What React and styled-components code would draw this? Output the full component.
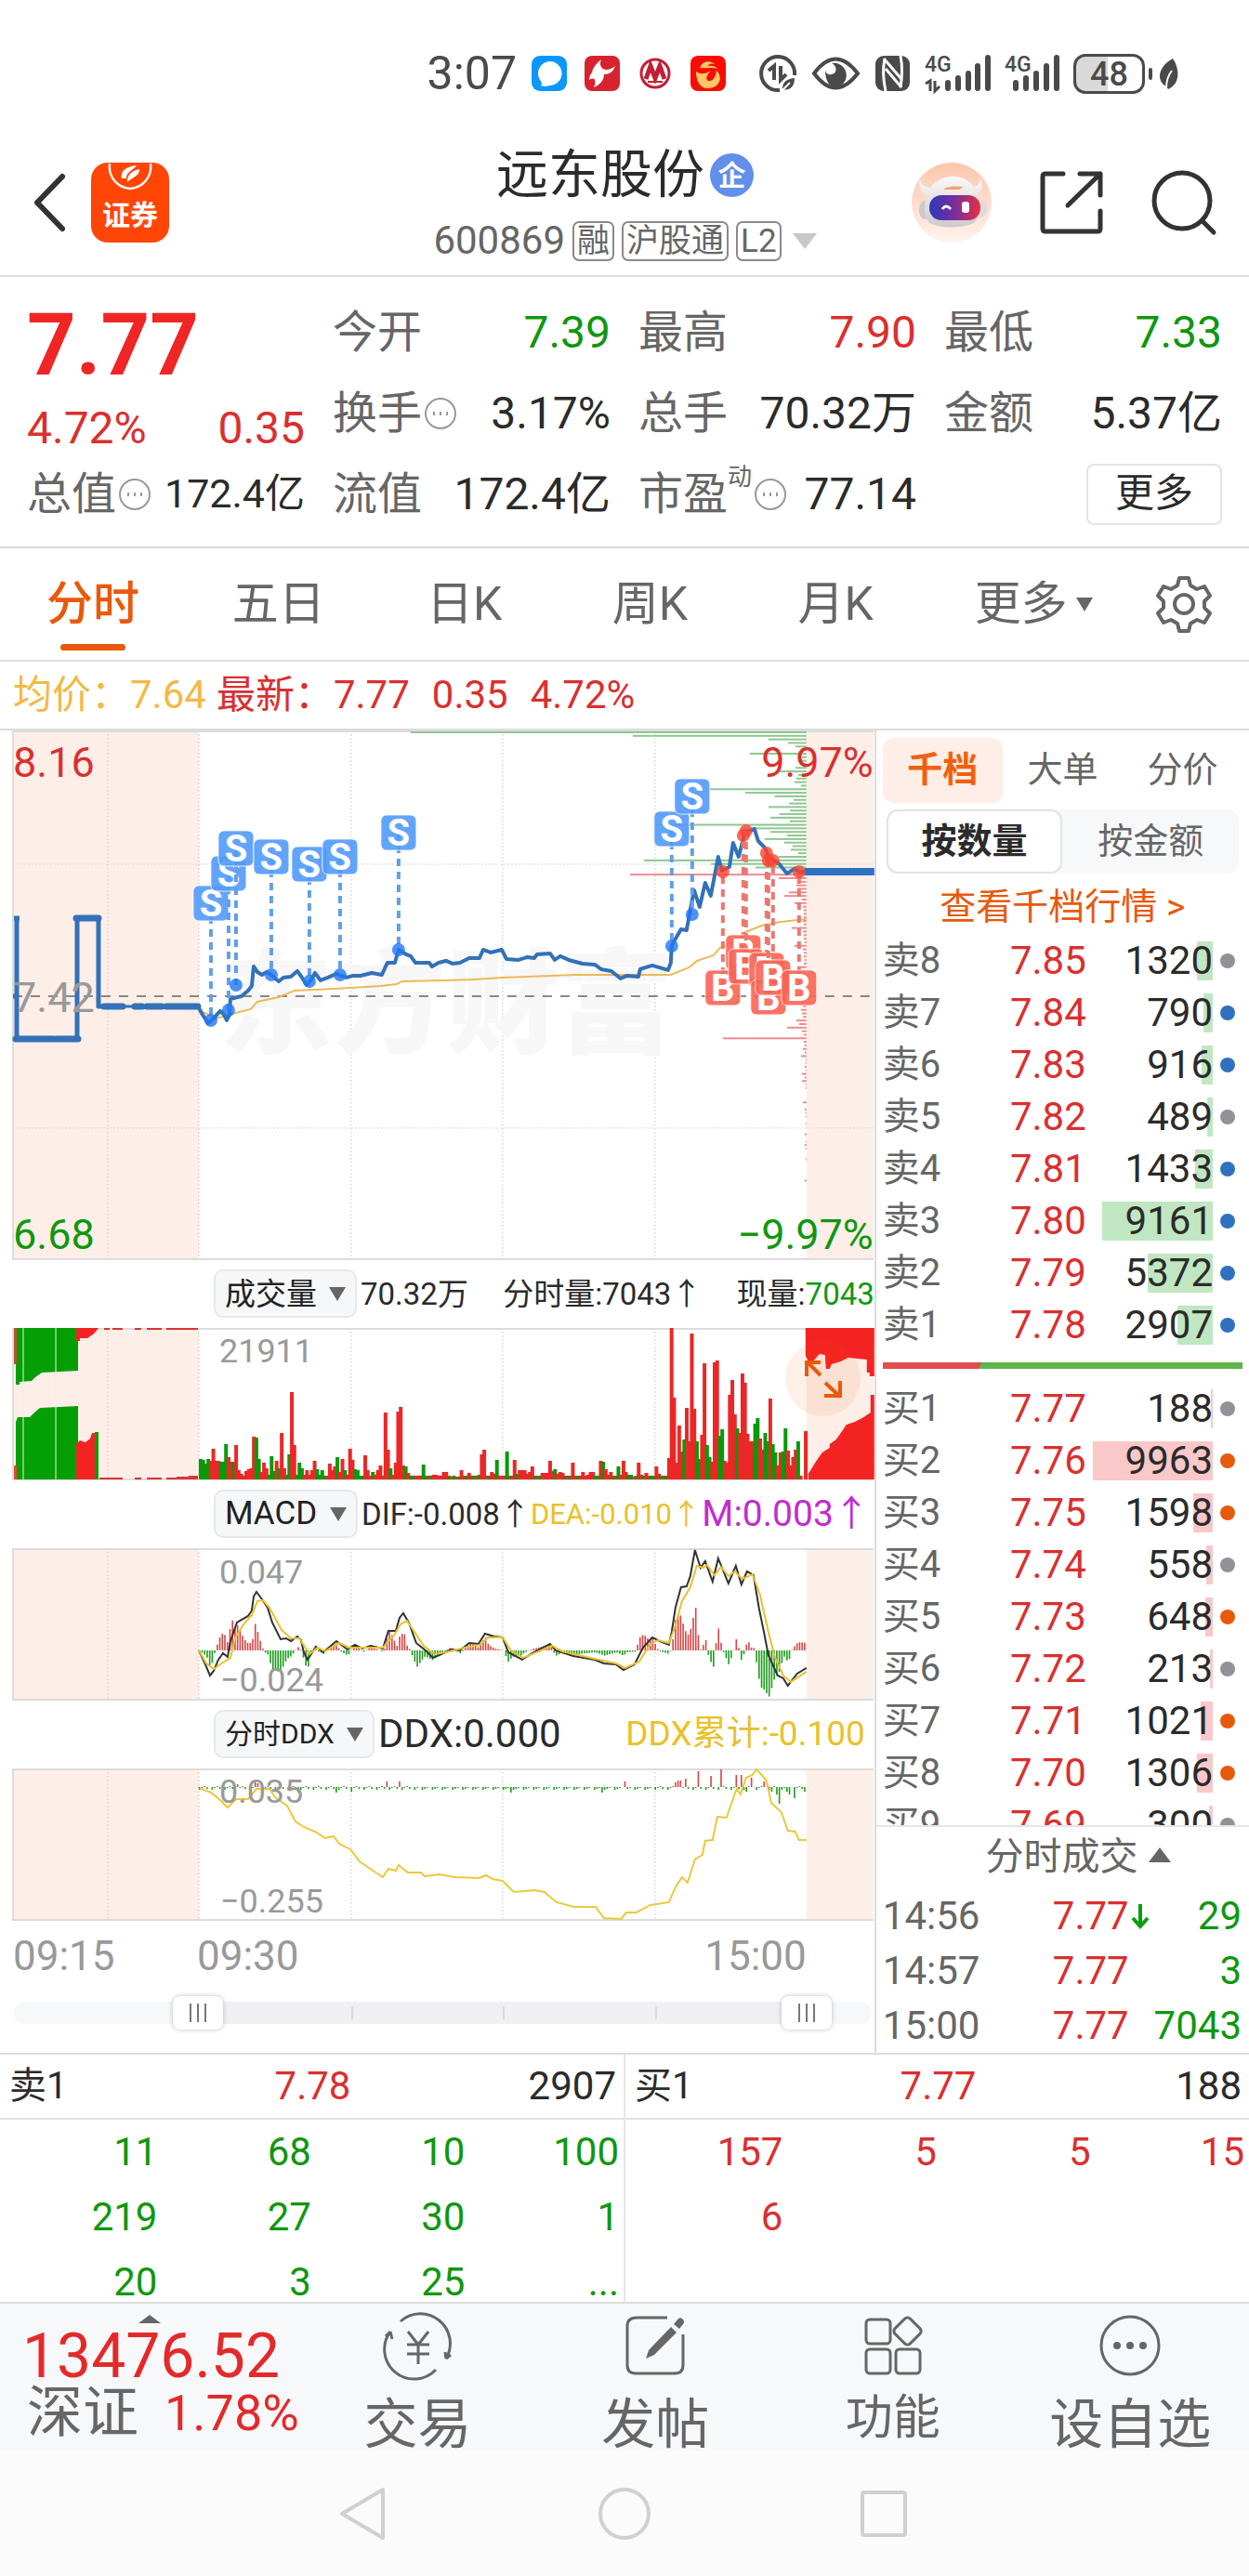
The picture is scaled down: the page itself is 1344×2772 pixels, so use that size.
import React, { useState } from "react";
import styled, { createGlobalStyle } from "styled-components";

const GlobalStyle = createGlobalStyle`
  * { box-sizing: border-box; }
  body {
    margin: 0;
    background: #fff;
    color: #2b2b2b;
    font-family: Roboto, "Noto Sans CJK SC", sans-serif;
    line-height: 1.2;
  }
  button, select, input { font-family: inherit; line-height: inherit; margin: 0; }
  button { border: 0; padding: 0; background: none; color: inherit; cursor: pointer; }
  a { color: inherit; text-decoration: none; }
  svg { display: block; overflow: visible; }
  table { border-collapse: collapse; table-layout: fixed; width: 100%; }
  th, td { padding: 0; font-weight: 400; }
`;

const RED = "#d9302f";
const GREEN = "#0f970f";
const ORANGE = "#e8590c";
const GRAY = "#666";
const LINE = "#dcdcdc";
const PINK = "#fdeee8";
const colors = { red: RED, green: GREEN, dark: "#2b2b2b", gray: GRAY };

/* ---------- status bar ---------- */
const StatusBar = styled.div`
  height: 108px;
  padding: 50px 76px 0 0;
  display: flex;
  justify-content: flex-end;
  align-items: center;
  gap: 16px;
  color: #4a4a4a;
`;
const Clock = styled.time`
  font-size: 50px;
  line-height: 58px;
`;
const Notices = styled.div`
  display: flex;
  gap: 19px;
  margin-right: 20px;
`;
const Battery = styled.div`
  position: relative;
  width: 77px;
  height: 43px;
  border: 3px solid #4a4a4a;
  border-radius: 13px;
  background: linear-gradient(90deg, #d9d9d9 48%, #fff 48%);
  font-size: 36px;
  font-weight: 500;
  line-height: 38px;
  text-align: center;
  &::after {
    content: "";
    position: absolute;
    right: -11px;
    top: 12px;
    width: 4px;
    height: 13px;
    border-radius: 2px;
    background: #4a4a4a;
  }
`;

function Signal({ data }) {
  const bars = data ? [24, 35, 46, 56, 67] : [11, 22, 33, 44, 55];
  const heights = [12, 17, 22, 30, 39];
  const w = data ? 70 : 58;
  return (
    <svg width={w} height="40" viewBox={`0 0 ${w} 40`} fill="currentColor">
      <text x="0" y="18" fontSize="23" fontWeight="500">4G</text>
      {data && <path d="M1 31l5-3v11M6 28v11M11 28v11l5-5" fill="none" stroke="currentColor" strokeWidth="3" />}
      {bars.map((x, i) => (
        <rect key={x} x={x - 2} y={39 - heights[i]} width="6" height={heights[i]} rx="3" />
      ))}
    </svg>
  );
}

function Status() {
  return (
    <StatusBar>
      <Clock>3:07</Clock>
      <Notices>
        <svg width="38" height="38" viewBox="0 0 38 38">
          <rect width="38" height="38" rx="9" fill="#0b97ff" />
          <path d="M19 6a13 13 0 0 1 1 26c-3 0-5 2-10 0 2-2 1-3-1-6A13 13 0 0 1 19 6z" fill="#fff" />
        </svg>
        <svg width="38" height="38" viewBox="0 0 38 38">
          <rect width="38" height="38" rx="8" fill="#d6232f" />
          <path d="M18 4c-6 5-9 9-10 14-2 2-3 5-3 8 3-2 5-2 6 0 1 3 0 5-1 8 7-3 11-8 11-14 6 0 10-3 12-9-5 4-10 5-13 3-3-2-4-6-2-10z" fill="#fff" />
        </svg>
        <svg width="38" height="38" viewBox="0 0 38 38">
          <circle cx="19" cy="19" r="15" fill="#fff" stroke="#c01f35" strokeWidth="3" />
          <path d="M9 25l5-14 5 13 5-13 5 14" fill="none" stroke="#c01f35" strokeWidth="5" />
          <path d="M11 28h16" stroke="#c01f35" strokeWidth="2" />
        </svg>
        <svg width="38" height="38" viewBox="0 0 38 38">
          <rect width="38" height="38" rx="8" fill="#f80d05" />
          <path d="M6 17c6 4 11 2 16-1-5 5-6 9-3 11 5 1 8-4 9-11 7 6 4 18-8 19C11 36 6 28 6 17z" fill="#ffc867" />
          <path d="M10 13c3-7 9-9 17-4-5-1-7 0-9 2 4-1 9 0 11 3-7-2-12 0-19-1z" fill="#ffc867" />
        </svg>
      </Notices>
      <svg width="40" height="40" viewBox="0 0 40 40" fill="none" stroke="currentColor" strokeWidth="4">
        <path d="M22 38A18 18 0 1 1 38 22" />
        <path d="M10 17l6-5v15M23 12v15l6-6" strokeWidth="4" />
        <path d="M25 37c0-8 4-11 13-12 0 9-5 14-13 12z" fill="currentColor" stroke="none" />
        <path d="M25 38l8-8" stroke="#fff" strokeWidth="2" />
      </svg>
      <svg width="53" height="38" viewBox="0 0 53 38">
        <path d="M3 19Q26-12 50 19Q26 50 3 19z" fill="none" stroke="currentColor" strokeWidth="4" />
        <path d="M22 8c6 3 6 11 0 12-4 1-6-1-7-4 0 10 4 18 12 18a13 13 0 0 0-5-26z" fill="currentColor" />
      </svg>
      <svg width="37" height="38" viewBox="0 0 37 38">
        <rect width="37" height="38" rx="9" fill="currentColor" />
        <path d="M10 4c-2 8-2 20 1 34M27 0c2 10 2 22 0 34" stroke="#fff" strokeWidth="3" fill="none" />
        <path d="M9 3l19 22M11 14l17 20" stroke="#fff" strokeWidth="3" />
      </svg>
      <Signal data />
      <Signal />
      <Battery>48</Battery>
      <svg width="20" height="34" viewBox="0 0 20 34">
        <path d="M14 1C5 6 0 13 0 20c0 5 3 9 7 11l2 3c14-6 12-23 5-33z" fill="currentColor" />
        <path d="M7 33c0-9 2-14 6-19" stroke="#fff" strokeWidth="2" fill="none" />
      </svg>
    </StatusBar>
  );
}

/* ---------- title ---------- */
const Header = styled.header`
  display: grid;
  grid-template-columns: 1fr auto 1fr;
  align-items: center;
  height: 190px;
  padding: 32px 35px 0 36px;
  border-bottom: 2px solid ${LINE};
`;
const HeaderSide = styled.div`
  display: flex;
  align-items: center;
  justify-content: ${(p) => (p.$end ? "flex-end" : "flex-start")};
  gap: ${(p) => (p.$end ? "52px" : "26px")};
`;
const Brand = styled.button`
  width: 84px;
  height: 86px;
  border-radius: 18px;
  background: #ff4606;
  color: #fff;
  font-size: 30px;
  font-weight: 700;
  line-height: 38px;
  display: flex;
  flex-direction: column;
  align-items: center;
  gap: 4px;
`;
const NameRow = styled.div`
  display: flex;
  align-items: center;
  justify-content: center;
  height: 82px;
  gap: 6px;
`;
const Name = styled.h1`
  margin: 0;
  font-size: 56px;
  font-weight: 400;
  line-height: 82px;
`;
const NameBadge = styled.span`
  width: 47px;
  height: 47px;
  border-radius: 50%;
  background: #628fe9;
  color: #fff;
  font-size: 30px;
  font-weight: 700;
  line-height: 47px;
  text-align: center;
`;
const CodeRow = styled.div`
  display: flex;
  align-items: center;
  height: 60px;
  gap: 8px;
  color: ${GRAY};
  font-size: 42px;
`;
const Tag = styled.span`
  border: 2px solid #8a8a8a;
  border-radius: 7px;
  padding: 0 3px;
  height: 43px;
  font-size: 35px;
  line-height: 40px;
`;
const Caret = styled.i`
  display: inline-block;
  border: ${(p) => p.$size}px solid transparent;
  border-top: ${(p) => p.$tall}px solid ${(p) => p.$color};
  border-bottom: 0;
  ${(p) => p.$up && "transform: rotate(180deg); vertical-align: 8px;"}
  margin-left: ${(p) => p.$gap || 0}px;
`;

function TitleBar() {
  return (
    <Header>
      <HeaderSide>
        <button aria-label="返回">
          <svg width="36" height="64" viewBox="0 0 36 64" fill="none" stroke="#333" strokeWidth="6" strokeLinecap="round" strokeLinejoin="round">
            <path d="M31 4L4 32l27 28" />
          </svg>
        </button>
        <Brand>
          <svg width="50" height="34" viewBox="0 0 50 34">
            <path d="M3 1C1 16 12 27 25 28C38 27 49 16 47 1" fill="none" stroke="#fff" strokeWidth="2.500" />
            <path d="M16 17C14 10 20 4 32 3c-4 6-11 6-11 14zM22 21c0-9 5-12 13-14 0 8-7 8-13 14z" fill="#fff" />
          </svg>
          证券
        </Brand>
      </HeaderSide>
      <div>
        <NameRow>
          <Name>远东股份</Name>
          <NameBadge>企</NameBadge>
        </NameRow>
        <CodeRow>
          600869
          <Tag>融</Tag>
          <Tag>沪股通</Tag>
          <Tag>L2</Tag>
          <Caret $size={13} $tall={17} $color="#c8c8c8" $gap={4} />
        </CodeRow>
      </div>
      <HeaderSide $end>
        <button aria-label="助手">
          <svg width="86" height="86" viewBox="0 0 86 86">
            <defs>
              <linearGradient id="halo" x1="0" y1="0" x2="0" y2="1">
                <stop offset="0" stopColor="#fcc6ab" />
                <stop offset="1" stopColor="#fff3ee" />
              </linearGradient>
              <linearGradient id="visor">
                <stop offset="0" stopColor="#2a3bb8" />
                <stop offset="0.5" stopColor="#7a2d9c" />
                <stop offset="1" stopColor="#e8303c" />
              </linearGradient>
              <linearGradient id="shell" x1="0" y1="0" x2="0" y2="1">
                <stop offset="0" stopColor="#fbf8f8" />
                <stop offset="1" stopColor="#cfc9cb" />
              </linearGradient>
            </defs>
            <circle cx="43" cy="43" r="43" fill="url(#halo)" />
            <ellipse cx="14" cy="51" rx="6" ry="10" fill="#cdc8ca" />
            <ellipse cx="75" cy="50" rx="6" ry="9" fill="#dedadb" />
            <path d="M9 17c1 7 5 9 11 10 12-16 36-16 47-1 5-1 6-5 7-9 4 9 1 15-4 18 5 14 3 24-3 30-14 6-36 6-48 0-6-8-6-19-3-30-6-3-9-10-7-18z" fill="url(#shell)" />
            <rect x="19" y="35" width="55" height="27" rx="13" fill="url(#visor)" />
            <path d="M33 50q4-6 9 0" fill="none" stroke="#fff" strokeWidth="3" />
            <rect x="54" y="42" width="8" height="12" rx="3" fill="#fff" />
            <path d="M34 29q5-5 22-3l-5 3z" fill="#eea26b" />
          </svg>
        </button>
        <button aria-label="分享">
          <svg width="68" height="68" viewBox="0 0 68 68" fill="none" stroke="#333" strokeWidth="5" strokeLinecap="round" strokeLinejoin="round">
            <path d="M25 3H6q-3 0-3 3v56q0 3 3 3h56q3 0 3-3V43" />
            <path d="M43 3h22v23M65 3L30 37" />
          </svg>
        </button>
        <button aria-label="搜索">
          <svg width="70" height="70" viewBox="0 0 70 70" fill="none" stroke="#333" strokeWidth="5" strokeLinecap="round">
            <circle cx="33" cy="33" r="30" />
            <path d="M55 55l12 12" />
          </svg>
        </button>
      </HeaderSide>
    </Header>
  );
}

/* ---------- quote ---------- */
const QuoteGrid = styled.section`
  display: grid;
  grid-template-columns: repeat(4, 1fr);
  grid-auto-rows: 87px;
  column-gap: 30px;
  padding: 16px 29px 13px;
  border-bottom: 2px solid ${LINE};
`;
const Lead = styled.div`
  grid-row: 1 / 3;
  color: ${RED};
`;
const Price = styled.div`
  color: #f02525;
  font-size: 92px;
  font-weight: 700;
  line-height: 116px;
`;
const Change = styled.div`
  display: flex;
  justify-content: space-between;
  font-size: 48px;
  line-height: 62px;
`;
const StatCell = styled.div`
  display: flex;
  align-items: center;
  font-size: 48px;
  white-space: nowrap;
`;
const StatLabel = styled.span`
  color: ${GRAY};
`;
const Sup = styled.sup`
  font-size: 26px;
  line-height: 0;
  vertical-align: 26px;
`;
const StatValue = styled.span`
  margin-left: auto;
  color: ${(p) => colors[p.$tone]};
  font-size: ${(p) => (p.$small ? 43 : 48)}px;
`;
const MoreButton = styled.button`
  justify-self: end;
  align-self: center;
  width: 146px;
  height: 66px;
  border: 2px solid #e4e4e4;
  border-radius: 8px;
  font-size: 42px;
`;

const Info = () => (
  <svg width="38" height="36" viewBox="0 0 38 36" fill="none" stroke="#999" strokeWidth="2">
    <circle cx="20" cy="18" r="16" />
    <path d="M12 18h2M19 18h2M26 18h2" strokeWidth="4" />
  </svg>
);

const Stat = ({ label, sup, info, value, tone = "dark", small }) => (
  <StatCell>
    <StatLabel>
      {label}
      {sup && <Sup>{sup}</Sup>}
    </StatLabel>
    {info && <Info />}
    <StatValue $tone={tone} $small={small}>{value}</StatValue>
  </StatCell>
);

function Quote() {
  return (
    <QuoteGrid>
      <Lead>
        <Price>7.77</Price>
        <Change>
          <span>4.72%</span>
          <span>0.35</span>
        </Change>
      </Lead>
      <Stat label="今开" value="7.39" tone="green" />
      <Stat label="最高" value="7.90" tone="red" />
      <Stat label="最低" value="7.33" tone="green" />
      <Stat label="换手" info value="3.17%" />
      <Stat label="总手" value="70.32万" />
      <Stat label="金额" value="5.37亿" />
      <Stat label="总值" info value="172.4亿" small />
      <Stat label="流值" value="172.4亿" />
      <Stat label="市盈" sup="动" info value="77.14" />
      <MoreButton>更多</MoreButton>
    </QuoteGrid>
  );
}

/* ---------- period tabs ---------- */
const Tabs = styled.nav`
  display: flex;
  height: 122px;
  padding-right: 22px;
  border-bottom: 2px solid ${LINE};
`;
const Tab = styled.button`
  position: relative;
  flex: ${(p) => p.$grow || 200};
  font-size: 50px;
  color: ${(p) => (p.$active ? ORANGE : GRAY)};
  font-weight: ${(p) => (p.$active ? 500 : 400)};
  display: flex;
  align-items: center;
  justify-content: center;
  &::after {
    content: "";
    display: ${(p) => (p.$active ? "block" : "none")};
    position: absolute;
    bottom: 10px;
    left: calc(50% - 35px);
    width: 70px;
    height: 7px;
    border-radius: 4px;
    background: ${ORANGE};
  }
`;

function PeriodTabs() {
  const [active, setActive] = useState("分时");
  return (
    <Tabs>
      {["分时", "五日", "日K", "周K", "月K"].map((name) => (
        <Tab key={name} $active={name === active} onClick={() => setActive(name)}>{name}</Tab>
      ))}
      <Tab $grow={226}>
        更多
        <Caret $size={9} $tall={15} $color={GRAY} $gap={9} />
      </Tab>
      <Tab $grow={97} aria-label="设置">
        <svg width="62" height="62" viewBox="0 0 62 62" fill="none" stroke={GRAY} strokeWidth="4" strokeLinejoin="round">
          <path d="M26 3h10l2 8 7 4 8-3 6 10-6 6v7l6 6-6 10-8-3-7 4-2 8H26l-2-8-7-4-8 3-6-10 6-6v-7l-6-6 6-10 8 3 7-4z" />
          <circle cx="31" cy="31" r="10" />
        </svg>
      </Tab>
    </Tabs>
  );
}

const Legend = styled.div`
  display: flex;
  gap: 24px;
  height: 74px;
  padding-left: 14px;
  border-bottom: 2px solid ${LINE};
  font-size: 42px;
  line-height: 72px;
  color: ${RED};
`;
const Average = styled.span`
  color: #f2b944;
  margin-right: -13px;
`;

/* ---------- charts ---------- */
const Panels = styled.main`
  display: flex;
  border-bottom: 2px solid ${LINE};
`;
const ChartColumn = styled.section`
  flex: 0 0 70%;
  min-width: 0;
`;
const Plot = styled.div`
  position: relative;
  svg { width: 100%; height: auto; }
`;
const PlotHead = styled.div`
  display: flex;
  align-items: center;
  height: 73px;
  padding-left: 230px;
  font-size: 33px;
  white-space: nowrap;
`;
const Picker = styled.label`
  position: relative;
  margin-right: 4px;
  &::after {
    content: "";
    position: absolute;
    right: 12px;
    top: 19px;
    border: 9px solid transparent;
    border-top: 15px solid ${GRAY};
    border-bottom: 0;
    pointer-events: none;
  }
  select {
    appearance: none;
    display: block;
    height: 52px;
    padding: 0 41px 0 10px;
    border: 2px solid #e6e8ec;
    border-radius: 10px;
    background: #f6f7f9;
    color: #222;
    font-size: ${(p) => p.$size || 33}px;
  }
`;
const Reading = styled.span`
  color: ${(p) => p.$color || "#2b2b2b"};
  font-size: ${(p) => p.$size || 33}px;
  margin-left: ${(p) => (p.$push ? "auto" : 0)};
  margin-right: ${(p) => p.$end || 0}px;
`;
const ExpandButton = styled.button`
  position: absolute;
  right: 15px;
  top: 14px;
  width: 81px;
  height: 81px;
  border-radius: 50%;
  background: rgba(232, 89, 12, 0.09);
`;
const Times = styled.div`
  display: grid;
  grid-template-columns: 198fr 458fr 198fr;
  height: 71px;
  padding: 9px 73px 0 14px;
  color: #999;
  font-size: 44px;
  line-height: 58px;
  span:last-child { text-align: right; }
`;

const MINUTE = 2.725;
const OPEN_X = 214;
const CLOSE_X = 868;
const GRID_X = [116, 214, 378, 541, 705];
const toPoints = (list) => list.map((p) => p.join(",")).join(" ");

const Frame = ({ height }) => (
  <g>
    <rect x="14" y="0" width="200" height={height} fill={PINK} />
    <rect x={CLOSE_X} y="0" width="72" height={height} fill={PINK} />
    {GRID_X.map((x) => (
      <path key={x} d={`M${x} 0V${height}`} stroke="#d4d0ce" strokeDasharray="2 2" />
    ))}
    <path d={`M14 0V${height - 1}H940M14 1H940`} fill="none" stroke={LINE} strokeWidth="2" />
  </g>
);

const price = [
  [213, 297], [218, 306], [224, 315], [230, 310], [237, 302], [241, 306], [244, 312], [247, 306], [248, 289],
  [260, 286], [267, 280], [271, 275], [273, 254], [277, 260], [282, 263], [287, 260], [293, 264], [300, 270],
  [305, 266], [313, 265], [320, 259], [325, 266], [330, 274], [335, 268], [339, 261], [345, 269], [353, 266],
  [362, 262], [373, 266], [380, 264], [388, 264], [400, 261], [411, 263], [417, 250], [425, 250], [429, 236],
  [437, 241], [442, 243], [447, 250], [462, 250], [465, 254], [472, 250], [480, 248], [487, 251], [495, 250],
  [505, 245], [516, 245], [520, 236], [528, 239], [540, 236], [545, 246], [558, 247], [568, 244], [575, 245],
  [578, 241], [592, 240], [597, 247], [603, 243], [612, 247], [627, 251], [640, 252], [647, 257], [658, 259],
  [668, 267], [675, 264], [687, 265], [689, 257], [702, 253], [719, 258], [722, 250], [723, 231], [733, 214],
  [739, 215], [743, 193], [747, 172], [753, 190], [759, 164], [765, 178], [773, 136], [777, 151], [785, 147],
  [789, 121], [795, 136], [802, 109], [812, 106], [816, 119], [823, 126], [828, 137], [838, 143], [847, 154],
  [855, 149], [860, 152], [868, 152],
];
const average = [
  [213, 297], [218, 303], [233, 310], [253, 304], [270, 300], [277, 292], [300, 287], [317, 280], [360, 278],
  [410, 275], [427, 273], [433, 270], [480, 269], [510, 268], [540, 266], [620, 263], [722, 263], [742, 255],
  [750, 248], [768, 242], [775, 234], [793, 225], [802, 217], [820, 210], [840, 206], [868, 203],
];
// x, badge centre, point on the line
const sells = [
  [227, 186, 312], [246, 154, 301], [254, 127, 274], [292, 136, 263], [333, 144, 270], [366, 136, 263],
  [429, 110, 236], [723, 106, 232], [745, 71, 198],
];
const buys = [
  [778, 277, 152], [800, 239, 113], [803, 254, 108], [825, 258, 132], [827, 287, 140], [832, 266, 140], [860, 277, 152],
];
// resting orders by price step, asks first
const depth = [
  426, 187, 41, 20, 12, 6, 61, 5, 8, 7, 12, 30, 9, 11, 13, 6, 106, 66, 34, 14, 19, 41, 18, 29, 39, 18, 162, 57, 39,
  21, 45, 24, 15, 17, 9, 30, 175, 103, 55, 12, 190, 30, 10, 11, 10, 19, 24, 5, 13, 4, 3, 3, 3, 4, 3, 16, 4, 3, 3,
  2, 13, 4, 3, 3, 2, 3, 10, 5, 3, 2, 4, 3, 3, 4, 6, 5, 3, 4, 6, 5, 4, 11, 8, 21, 5, 3, 90, 3, 2, 4, 2, 6, 1, 1,
  2, 1, 5, 2, 5, 1, 1, 0, 0, 0, 4, 0, 2, 1, 1, 0, 1, 0, 0, 2, 0, 1, 2, 1, 0, 0, 1, 0, 0, 0, 0, 0, 2,
];

function Marks({ list, letter, fill, line, dot }) {
  return list.map(([x, y, to]) => (
    <g key={x}>
      <path d={`M${x} ${y}V${to}`} stroke={line} strokeWidth="4" strokeDasharray="8 6" />
      <circle cx={x} cy={to} r="7" fill={dot} fillOpacity="0.8" />
      <rect x={x - 19} y={y - 19} width="38" height="38" rx="6" fill={fill} fillOpacity="0.9" stroke="#fff" strokeOpacity="0.8" />
      <text x={x} y={y + 14} fontSize="40" fontWeight="700" fill="#fff" textAnchor="middle">{letter}</text>
    </g>
  ));
}

function PriceChart() {
  return (
    <Plot>
      <svg viewBox="0 0 941 570" role="img" aria-label="分时走势">
        <Frame height={570} />
        <path d="M14 144H940M14 428H940" stroke="#d9d6d4" strokeDasharray="2 2" />
        <text x="480" y="337" fontSize="122" fontWeight="900" fill="#f7f7f7" textAnchor="middle">东方财富</text>
        <path d="M14 286H940" stroke="#888" strokeWidth="2" strokeDasharray="10 9" />
        {depth.map((w, i) => (
          <rect key={i} x={CLOSE_X - w} y={1 + i * 3.83} width={w} height="2" fill={i < 40 ? "#8fc791" : "#ee8b8e"} />
        ))}
        <polyline points={toPoints(average)} fill="none" stroke="#edb956" strokeWidth="2" />
        <g fill="none" stroke="#3371b8" strokeLinejoin="round">
          <path d="M14 286H20M15 202H21M18 202V332M17 332H84M83 332V202M82 202H106M106 202V297H132" strokeWidth="5" />
          <path d="M106 297H213" strokeWidth="3" />
          <path d="M112 297H132M145 297H153M158 297H174M179 297H213M17 332H58M61 332H84M82 202H106" strokeWidth="7" strokeLinecap="round" />
          <polyline points={toPoints(price)} strokeWidth="4" />
          <path d="M866 152H941" strokeWidth="8" stroke="#2f70c4" />
        </g>
        <Marks list={sells} letter="S" fill="#529afb" line="#619fe9" dot="#2078f5" />
        <Marks list={buys} letter="B" fill="#fb6454" line="#e9796f" dot="#fa4432" />
        <g fontSize="45">
          <text x="14" y="50" fill={RED}>8.16</text>
          <text x="14" y="303" fill="#999">7.42</text>
          <text x="14" y="558" fill={GREEN}>6.68</text>
          <text x="940" y="50" fill={RED} textAnchor="end">9.97%</text>
          <text x="940" y="558" fill={GREEN} textAnchor="end">−9.97%</text>
        </g>
      </svg>
    </Plot>
  );
}

// volume per minute, negative when the minute closed lower
const volume = [
  -22, -21, -17, -22, 20, 33, 20, 20, -19, -19, -38, 24, 19, -19, 37, 10, 6, 4, 9, 11, 12, 46, -45, -22, 8, 18, 12,
  -5, -25, -9, 20, -12, 50, 12, -5, -27, 94, 37, -5, -18, -12, 5, 10, 5, 10, 20, -11, -5, -10, -4, 4, 17, 10, 14,
  -24, 8, 22, -10, 5, 33, 21, -11, -10, -4, -4, 26, 10, 4, -8, 5, 10, 15, 4, 72, 32, -12, 5, 18, 73, 78, 15, -14,
  7, -4, -4, 4, 4, 4, -16, -4, 4, -4, 5, 5, 4, 4, 8, 8, -4, 3, -4, 3, -3, 10, 4, -4, 7, 4, -4, 4, -5, 27, 32, 4,
  -4, 8, 6, -21, 4, 4, 4, -30, -4, 4, 21, -6, 10, 10, 10, 6, 8, 14, -4, 4, -4, 7, 7, 7, 20, 9, -11, 6, 8, 7, -4,
  4, -4, 18, 4, -4, 4, 8, 4, 5, 8, 8, -4, -4, 20, -19, 11, 5, 8, -4, 4, -14, 5, 20, 8, -5, -5, 3, -4, 18, 5, -4,
  7, 4, -4, -4, 14, 6, -4, 4, -4, 23, 163, 88, 18, 58, 30, -43, 77, 41, 157, 76, -41, -22, 48, 125, -37, -24, 19,
  126, 128, -47, -54, 20, 18, 91, 107, 70, -55, 50, 114, 104, 49, 41, 41, -60, -66, 44, 32, -50, -41, 87, -38,
  -29, 15, 29, -30, -55, 31, 15, 24, 32, -41, 4, 0, 52,
];

function VolumeChart() {
  return (
    <Plot>
      <svg viewBox="0 0 941 164" role="img" aria-label="成交量">
        <Frame height={164} />
        {volume.map((v, i) => (
          <rect key={i} x={OPEN_X + i * MINUTE} y={163 - Math.abs(v)} width="4" height={Math.abs(v)} fill={v > 0 ? "#eb2727" : "#0a980a"} />
        ))}
        <g fill="#049f04">
          <path d="M17 0H84V46L45 48L38 53L34 57L21 58V61H17z" />
          <path d="M17 163V101L19 96H32L37 91L43 86L84 84V163z" />
        </g>
        <g fill="#f42323">
          <path d="M82 0H106L103 4L100 7L94 11H86V14H82z" />
          <path d="M82 163V125L86 121L92 123L97 119L99 113H102V163z" />
          <path d="M867 0H941V52H936V48H933V34L913 32L905 36L895 39L893 44H889L888 29L882 28L875 36L871 38L867 30z" />
          <path d="M870 163V157L878 144L885 134L893 129V125L900 120L907 110L911 104L920 101L928 97L937 91V72H941V163z" />
        </g>
        <rect x="102" y="112" width="4" height="51" fill="#049f04" />
        <rect x="15" y="0" width="3" height="39" fill="#b8532f" />
        <rect x="15" y="148" width="3" height="15" fill="#e0492f" />
        <path d="M25 0V163M60 0V163" stroke="#e9f3e2" />
        <path d="M112 1H118M121 1H132M145 1H152M158 1H174M179 1H213M107 162H132M145 162H152M158 162H174M179 162H213M190 161H213M203 160H213" stroke="#d33" strokeWidth="2" />
        <text x="236" y="37" fontSize="36" fill="#999">21911</text>
      </svg>
      <ExpandButton aria-label="放大">
        <svg viewBox="0 0 81 81" fill="none" stroke={ORANGE} strokeWidth="4">
          <path d="M38 23H23V38M24 23L38 37M43 45L59 60M59 43V59H42" />
        </svg>
      </ExpandButton>
    </Plot>
  );
}

const dif = [
  [214, 110], [220, 123], [226, 137], [230, 132], [235, 120], [240, 113], [245, 117], [248, 100], [255, 80],
  [267, 73], [271, 67], [273, 52], [276, 47], [282, 55], [288, 64], [293, 80], [302, 98], [308, 97], [313, 100],
  [320, 95], [324, 99], [327, 112], [331, 120], [340, 106], [348, 112], [362, 100], [374, 109], [382, 104],
  [390, 108], [399, 105], [412, 108], [418, 89], [426, 89], [430, 75], [434, 70], [440, 80], [448, 102],
  [458, 110], [466, 118], [480, 112], [485, 109], [495, 110], [505, 102], [515, 103], [522, 92], [532, 95],
  [541, 96], [547, 112], [562, 120], [573, 113], [592, 103], [598, 110], [617, 116], [640, 120], [650, 124],
  [663, 125], [671, 131], [683, 125], [692, 107], [702, 96], [710, 100], [720, 104], [723, 90], [727, 64],
  [733, 42], [739, 41], [743, 30], [748, 2], [754, 21], [759, 14], [767, 36], [773, 11], [784, 38], [792, 19],
  [798, 39], [804, 25], [811, 29], [817, 65], [822, 89], [827, 115], [837, 137], [843, 140], [848, 148],
  [858, 135], [868, 129],
];
const dea = [
  [214, 110], [222, 124], [230, 130], [237, 125], [248, 118], [253, 97], [262, 82], [271, 72], [277, 57],
  [283, 56], [290, 64], [303, 88], [313, 97], [322, 97], [328, 106], [333, 114], [342, 107], [350, 111],
  [365, 102], [376, 107], [390, 107], [412, 107], [424, 94], [431, 82], [438, 78], [446, 90], [456, 105],
  [468, 114], [480, 112], [500, 107], [517, 104], [525, 96], [541, 96], [550, 110], [563, 118], [580, 111],
  [594, 105], [605, 111], [640, 119], [663, 124], [673, 129], [688, 122], [700, 103], [708, 99], [720, 102],
  [727, 83], [734, 57], [743, 42], [750, 19], [757, 21], [761, 18], [769, 29], [776, 20], [784, 30], [791, 25],
  [799, 33], [810, 28], [818, 50], [827, 90], [834, 117], [843, 137], [851, 144], [868, 133],
];

const valueAt = (list, x) => {
  const i = Math.max(1, list.findIndex((p) => p[0] >= x));
  const [x0, y0] = list[i - 1];
  const [x1, y1] = list[i];
  return y0 + ((y1 - y0) * (x - x0)) / (x1 - x0);
};
const minutes = Array.from({ length: 240 }, (_, i) => OPEN_X + i * MINUTE);

const Bars = ({ zero, list }) =>
  list.map(([x, h]) => (
    <rect key={x} x={x} y={h > 0 ? zero - h : zero} width="1.6" height={Math.abs(h)} fill={h > 0 ? "#d64545" : "#1c9c1c"} />
  ));

function MacdChart() {
  const bars = minutes.map((x) => [x, (valueAt(dea, x) - valueAt(dif, x)) * 2]);
  return (
    <Plot>
      <svg viewBox="0 0 941 164" role="img" aria-label="MACD">
        <Frame height={164} />
        <Bars zero={110} list={bars} />
        <polyline points={toPoints(dif)} fill="none" stroke="#333" strokeWidth="2" />
        <polyline points={toPoints(dea)} fill="none" stroke="#e9c12f" strokeWidth="2" />
        <g fontSize="36" fill="#999">
          <text x="236" y="38">0.047</text>
          <text x="237" y="154">−0.024</text>
        </g>
      </svg>
    </Plot>
  );
}

const ddx = [
  [215, 21], [227, 26], [237, 34], [245, 42], [254, 33], [267, 33], [276, 22], [290, 22], [297, 32], [309, 40],
  [318, 57], [327, 63], [339, 68], [350, 75], [359, 73], [365, 81], [377, 87], [387, 100], [397, 107], [412, 117],
  [418, 108], [426, 110], [429, 104], [439, 112], [453, 112], [457, 116], [473, 114], [490, 117], [515, 118],
  [523, 115], [530, 119], [541, 121], [553, 133], [575, 131], [586, 133], [599, 144], [618, 149], [641, 149],
  [650, 161], [669, 162], [674, 155], [685, 155], [700, 147], [720, 144], [727, 128], [734, 117], [740, 123],
  [748, 98], [756, 93], [759, 78], [767, 77], [772, 52], [782, 53], [791, 27], [793, 22], [797, 28], [803, 10],
  [810, 7], [814, 1], [819, 6], [825, 13], [830, 37], [841, 47], [848, 67], [856, 68], [860, 77], [868, 77],
];
// minute -> size of the stand-out inflow or outflow
const flows = {
  15: 3, 22: 5, 23: 4, 39: -6, 54: -6, 60: -5, 74: 6, 79: 6, 123: -6, 159: -6, 168: 6, 188: 5, 189: 7, 190: 7,
  192: 9, 195: -3, 197: 17, 202: 12, 206: 19, 212: 13, 214: 13, 216: -5, 218: 10, 223: 6, 226: -5, 228: -8,
  229: -18, 232: -5, 233: -8, 235: -12, 239: -5,
};

function DdxChart() {
  const bars = minutes.map((x, i) => {
    const calm = i > 85 && i < 180 ? ((i * 5) % 4) - 3 : ((i * 7) % 5) - 3;
    return [x, flows[i] || calm];
  });
  return (
    <Plot>
      <svg viewBox="0 0 941 164" role="img" aria-label="分时DDX">
        <Frame height={164} />
        <Bars zero={20} list={bars} />
        <polyline points={toPoints(ddx)} fill="none" stroke="#e9c93c" strokeWidth="2" />
        <g fontSize="36" fill="#999">
          <text x="236" y="37">0.035</text>
          <text x="237" y="155">−0.255</text>
        </g>
      </svg>
    </Plot>
  );
}

const RangeBox = styled.div`
  position: relative;
  display: flex;
  align-items: center;
  height: 56px;
  padding: 0 3px 0 15px;
`;
const Track = styled.div`
  flex: 1;
  display: grid;
  grid-template-columns: 198fr 165fr 163fr 164fr 163fr 70fr;
  height: 24px;
  border-radius: 12px;
  overflow: hidden;
  background: #f7f8fa;
`;
const Span = styled.i`
  background: ${(p) => (p.$tick ? "linear-gradient(#dadadd, #dadadd) left center / 2px 14px no-repeat," : "")} linear-gradient(#f0f0f3, #f0f0f3);
`;
const Handle = styled.input`
  appearance: none;
  position: absolute;
  left: 15px;
  width: calc(100% - 18px);
  height: 36px;
  background: none;
  pointer-events: none;
  &::-webkit-slider-thumb {
    appearance: none;
    pointer-events: auto;
    width: 54px;
    height: 36px;
    border-radius: 8px;
    background:
      linear-gradient(90deg, #777 2px, transparent 2px 8px, #777 8px 10px, transparent 10px 16px, #777 16px 18px) center / 18px 20px no-repeat,
      #fff;
    box-shadow: 0 0 5px rgba(0, 0, 0, 0.25);
  }
`;

function Charts() {
  return (
    <ChartColumn>
      <PriceChart />
      <PlotHead>
        <Picker>
          <select aria-label="指标一"><option>成交量</option></select>
        </Picker>
        <Reading>70.32万</Reading>
        <Reading $push>分时量:7043↑</Reading>
        <Reading $push>现量:</Reading>
        <Reading $color={GREEN}>7043</Reading>
      </PlotHead>
      <VolumeChart />
      <PlotHead>
        <Picker $size={35}>
          <select aria-label="指标二"><option>MACD</option></select>
        </Picker>
        <Reading>DIF:-0.008↑</Reading>
        <Reading $color="#eac128" $size={31}>DEA:-0.010↑</Reading>
        <Reading $color="#c32ccd" $size={39} $push $end={5}>M:0.003↑</Reading>
      </PlotHead>
      <MacdChart />
      <PlotHead>
        <Picker $size={30}>
          <select aria-label="指标三"><option>分时DDX</option></select>
        </Picker>
        <Reading $size={42}>DDX:0.000</Reading>
        <Reading $color="#eac128" $size={37} $push $end={10}>DDX累计:-0.100</Reading>
      </PlotHead>
      <DdxChart />
      <Times>
        <span>09:15</span>
        <span>09:30</span>
        <span>15:00</span>
      </Times>
      <RangeBox>
        <Track>
          <i />
          <Span />
          <Span $tick />
          <Span $tick />
          <Span $tick />
        </Track>
        <Handle type="range" aria-label="开始时间" min="0" max="1000" defaultValue="197" />
        <Handle type="range" aria-label="结束时间" min="0" max="1000" defaultValue="951" />
      </RangeBox>
    </ChartColumn>
  );
}

/* ---------- order book ---------- */
const BookColumn = styled.aside`
  flex: 1;
  min-width: 0;
  border-left: 2px solid ${LINE};
`;
const BookTabs = styled.div`
  display: grid;
  grid-template-columns: repeat(3, 1fr);
  margin: 8px 7px 7px;
`;
const BookTab = styled.button`
  height: 70px;
  border-radius: 12px;
  font-size: 38px;
  font-weight: ${(p) => (p.$active ? 700 : 400)};
  color: ${(p) => (p.$active ? "#f2600f" : GRAY)};
  background: ${(p) => (p.$active ? "#feeee7" : "none")};
`;
const Segment = styled.div`
  display: flex;
  margin: 0 11px;
  border-radius: 12px;
  background: #f7f8fa;
`;
const SegmentButton = styled.button`
  flex: 1;
  height: 69px;
  border-radius: 12px;
  font-size: 38px;
  font-weight: ${(p) => (p.$active ? 700 : 400)};
  color: ${(p) => (p.$active ? "#2b2b2b" : GRAY)};
  background: ${(p) => (p.$active ? "#fff" : "none")};
  border: 2px solid ${(p) => (p.$active ? "#e2e3e6" : "transparent")};
`;
const BookLink = styled.a`
  display: block;
  height: 66px;
  text-align: center;
  color: ${ORANGE};
  font-size: 39px;
  line-height: 72px;
`;
const BookTable = styled.table`
  font-size: 42px;
  line-height: 50px;
  tr { height: 56px; }
  th {
    width: 105px;
    padding-left: 7px;
    text-align: left;
    font-size: 40px;
    color: ${GRAY};
  }
`;
const PriceCell = styled.td`
  width: 121px;
  text-align: right;
  color: ${RED};
`;
const SizeCell = styled.td`
  text-align: right;
  background: linear-gradient(${(p) => p.$fill}, ${(p) => p.$fill}) right center / ${(p) => p.$bar}px 42px no-repeat;
`;
const DotCell = styled.td`
  width: 39px;
  padding-left: 8px;
`;
const Dot = styled.i`
  display: block;
  width: 16px;
  height: 16px;
  border-radius: 50%;
  background: ${(p) => p.$color};
`;
const Balance = styled.div`
  height: 7px;
  margin: 12px 7px 15px;
  background: linear-gradient(120deg, #e04e50 92px, #60b44b 93px);
`;
const Clip = styled.div`
  height: 476px;
  overflow: hidden;
`;
const TradesHead = styled.button`
  display: block;
  width: 100%;
  height: 68px;
  padding-left: 34px;
  border-top: 2px solid #e6e6e6;
  color: ${GRAY};
  font-size: 41px;
`;
const TradesTable = styled.table`
  font-size: 42px;
  line-height: 50px;
  tr { height: 59px; }
  th { text-align: left; padding-left: 7px; color: ${GRAY}; width: 190px; }
  td:last-child { text-align: right; padding-right: 8px; color: ${GREEN}; }
`;
const TradePrice = styled.span`
  display: flex;
  align-items: center;
  gap: 2px;
  color: ${RED};
`;

const BLUE = "#3071bf";
const MUTED = "#919197";
const asks = [
  ["卖8", "7.85", 1320, MUTED], ["卖7", "7.84", 790, BLUE], ["卖6", "7.83", 916, BLUE], ["卖5", "7.82", 489, MUTED],
  ["卖4", "7.81", 1433, BLUE], ["卖3", "7.80", 9161, BLUE], ["卖2", "7.79", 5372, BLUE], ["卖1", "7.78", 2907, BLUE],
];
const bids = [
  ["买1", "7.77", 188, MUTED], ["买2", "7.76", 9963, ORANGE], ["买3", "7.75", 1598, ORANGE], ["买4", "7.74", 558, MUTED],
  ["买5", "7.73", 648, ORANGE], ["买6", "7.72", 213, MUTED], ["买7", "7.71", 1021, ORANGE], ["买8", "7.70", 1306, ORANGE],
  ["买9", "7.69", 300, MUTED],
];

const Book = ({ rows, fill }) => (
  <BookTable>
    <tbody>
      {rows.map(([label, value, size, dot]) => (
        <tr key={label}>
          <th scope="row">{label}</th>
          <PriceCell>{value}</PriceCell>
          <SizeCell $fill={fill} $bar={Math.max(2, Math.round((size / 9963) * 129))}>{size}</SizeCell>
          <DotCell><Dot $color={dot} /></DotCell>
        </tr>
      ))}
    </tbody>
  </BookTable>
);

function OrderBook() {
  return (
    <BookColumn>
      <BookTabs>
        <BookTab $active>千档</BookTab>
        <BookTab>大单</BookTab>
        <BookTab>分价</BookTab>
      </BookTabs>
      <Segment>
        <SegmentButton $active>按数量</SegmentButton>
        <SegmentButton>按金额</SegmentButton>
      </Segment>
      <BookLink href="#depth">查看千档行情 &gt;</BookLink>
      <Book rows={asks} fill="#c0e7c1" />
      <Balance />
      <Clip>
        <Book rows={bids} fill="#fac8c9" />
      </Clip>
      <TradesHead>
        分时成交
        <Caret $size={12} $tall={16} $color={GRAY} $gap={12} $up />
      </TradesHead>
      <TradesTable>
        <tbody>
          {[["14:56", 29, true], ["14:57", 3], ["15:00", 7043]].map(([time, size, down]) => (
            <tr key={time}>
              <th scope="row">{time}</th>
              <td>
                <TradePrice>
                  7.77
                  {down && (
                    <svg width="20" height="28" viewBox="0 0 20 28" fill="none" stroke="#0a9f0a" strokeWidth="4">
                      <path d="M10 1v24M2 16l8 9 8-9" />
                    </svg>
                  )}
                </TradePrice>
              </td>
              <td>{size}</td>
            </tr>
          ))}
        </tbody>
      </TradesTable>
    </BookColumn>
  );
}

/* ---------- queue at best price ---------- */
const Queues = styled.section`
  display: flex;
  height: 268px;
  overflow: hidden;
  border-bottom: 2px solid ${LINE};
  font-size: 42px;
`;
const Queue = styled.div`
  flex: 1;
  & + & { border-left: 2px solid #e6e6e6; }
`;
const QueueHead = styled.div`
  display: grid;
  grid-template-columns: 1fr auto 1fr;
  height: 70px;
  padding: 0 8px 0 10px;
  border-bottom: 2px solid #e2e2e2;
  line-height: 68px;
  span:first-child { font-size: 40px; }
  span:nth-child(2) { color: ${RED}; }
  span:last-child { text-align: right; }
`;
const QueueTable = styled.table`
  color: ${(p) => colors[p.$tone]};
  tr { height: 70px; }
  td { text-align: right; padding-right: 5px; }
  td:first-child { width: 26%; }
`;

const QueueSide = ({ label, value, total, tone, rows }) => (
  <Queue>
    <QueueHead>
      <span>{label}</span>
      <span>{value}</span>
      <span>{total}</span>
    </QueueHead>
    <QueueTable $tone={tone}>
      <tbody>
        {rows.map((row) => (
          <tr key={row.join()}>
            {row.map((cell, i) => <td key={i}>{cell}</td>)}
          </tr>
        ))}
      </tbody>
    </QueueTable>
  </Queue>
);

/* ---------- bottom bars ---------- */
const Dock = styled.footer`
  display: grid;
  grid-template-columns: 320fr 256fr 256fr 256fr 256fr;
  height: 158px;
  overflow: hidden;
  background: #f7f8fa;
  color: ${GRAY};
`;
const IndexBox = styled.button`
  display: flex;
  flex-direction: column;
  padding: 9px 0 0 24px;
  text-align: left;
  white-space: nowrap;
  color: #e32a2a;
`;
const IndexArrow = styled.div`
  display: flex;
  height: 12px;
  padding-left: 125px;
`;
const IndexValue = styled.div`
  font-size: 66px;
  line-height: 72px;
`;
const IndexRow = styled.div`
  display: flex;
  align-items: center;
  gap: 28px;
  padding-left: 5px;
  font-size: 54px;
  line-height: 50px;
  b { font-weight: 400; font-size: 60px; color: ${GRAY}; }
`;
const DockItem = styled.button`
  display: flex;
  flex-direction: column;
  align-items: center;
  padding-top: 11px;
  font-size: ${(p) => (p.$small ? 51 : 58)}px;
  line-height: 60px;
  white-space: nowrap;
  svg { flex-shrink: 0; margin-bottom: ${(p) => (p.$small ? 14 : 21)}px; }
`;
const SystemNav = styled.nav`
  display: flex;
  justify-content: center;
  gap: 219px;
  height: 136px;
  background: #fbfbfb;
  button { width: 60px; }
`;

const iconProps = { width: 68, height: 68, viewBox: "0 0 68 68", fill: "none", stroke: GRAY, strokeWidth: 3 };

function BottomDock() {
  return (
    <Dock>
      <IndexBox>
        <IndexArrow><Caret $size={12} $tall={9} $color={GRAY} $up /></IndexArrow>
        <IndexValue>13476.52</IndexValue>
        <IndexRow><b>深证</b>1.78%</IndexRow>
      </IndexBox>
      <DockItem>
        <svg {...iconProps} width="80" viewBox="-6 0 80 68">
          <path d="M15 8a32 32 0 0 1 49 40M64 48l5-4M64 48l-1-7M53 60A32 32 0 0 1 4 19M4 19l-5 5M4 19l2 8" />
          <path d="M23 19l11 14 11-14M34 33v21M22 33h24M22 43h24" />
        </svg>
        交易
      </DockItem>
      <DockItem>
        <svg {...iconProps}>
          <path d="M47 4H14Q4 4 4 13V55q0 9 9 9H55q9 0 9-9V22" />
          <path d="M51 14l6 6L33 44l-9 4 3-9zM54 11l5-6q3-2 5 1t0 5l-4 5z" fill={GRAY} stroke="none" />
        </svg>
        发帖
      </DockItem>
      <DockItem $small>
        <svg {...iconProps}>
          <rect x="5" y="6" width="26" height="26" rx="4" />
          <rect x="5" y="38" width="26" height="26" rx="4" />
          <rect x="37" y="38" width="26" height="26" rx="4" />
          <rect x="38" y="7" width="23" height="23" rx="4" transform="rotate(45 49.500 18.500)" />
        </svg>
        功能
      </DockItem>
      <DockItem>
        <svg {...iconProps}>
          <circle cx="34" cy="34" r="31" />
          <g fill={GRAY} stroke="none">
            <circle cx="20" cy="34" r="4" />
            <circle cx="34" cy="34" r="4" />
            <circle cx="48" cy="34" r="4" />
          </g>
        </svg>
        设自选
      </DockItem>
    </Dock>
  );
}

const navIcon = { width: 60, height: 60, viewBox: "0 0 60 60", fill: "none", stroke: "#d0d0d0", strokeWidth: 4, strokeLinejoin: "round" };

export default function App() {
  return (
    <>
      <GlobalStyle />
      <Status />
      <TitleBar />
      <Quote />
      <PeriodTabs />
      <Legend>
        <Average>均价：7.64</Average>
        <span>最新：7.77</span>
        <span>0.35</span>
        <span>4.72%</span>
      </Legend>
      <Panels>
        <Charts />
        <OrderBook />
      </Panels>
      <Queues>
        <QueueSide
          label="卖1"
          value="7.78"
          total="2907"
          tone="green"
          rows={[[11, 68, 10, 100], [219, 27, 30, 1], [20, 3, 25, "..."]]}
        />
        <QueueSide label="买1" value="7.77" total="188" tone="red" rows={[[157, 5, 5, 15], [6, "", "", ""]]} />
      </Queues>
      <BottomDock />
      <SystemNav>
        <button aria-label="后退">
          <svg {...navIcon}><path d="M49 4V56L5 30z" /></svg>
        </button>
        <button aria-label="主页">
          <svg {...navIcon}><circle cx="30" cy="30" r="26" /></svg>
        </button>
        <button aria-label="最近任务">
          <svg {...navIcon}><rect x="7" y="7" width="46" height="46" rx="2" /></svg>
        </button>
      </SystemNav>
    </>
  );
}
